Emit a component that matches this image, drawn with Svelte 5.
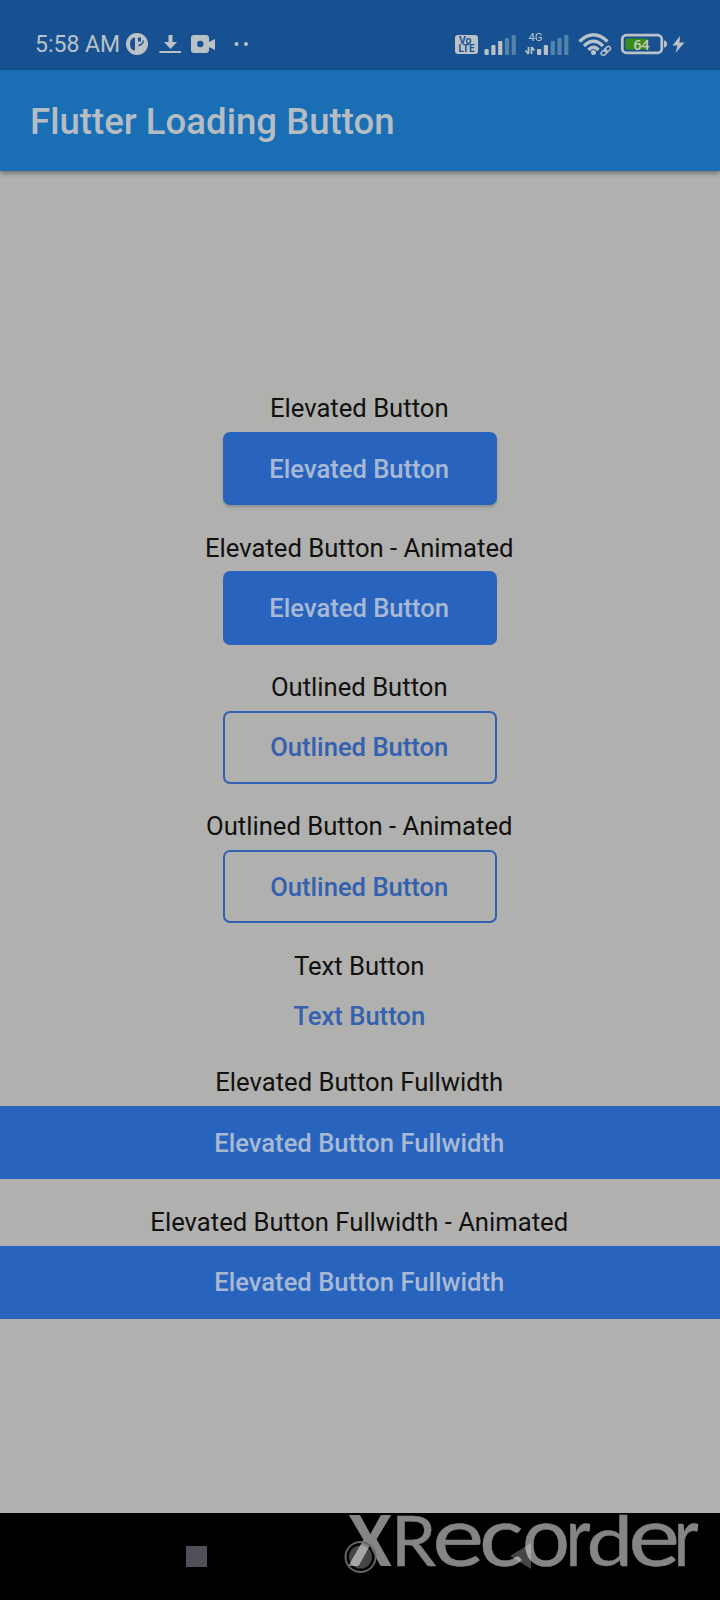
<script>
  const demos = [
    { label: 'Elevated Button', text: 'Elevated Button', kind: 'elevated raised' },
    { label: 'Elevated Button - Animated', text: 'Elevated Button', kind: 'elevated' },
    { label: 'Outlined Button', text: 'Outlined Button', kind: 'outlined' },
    { label: 'Outlined Button - Animated', text: 'Outlined Button', kind: 'outlined' },
    { label: 'Text Button', text: 'Text Button', kind: 'flat' },
    { label: 'Elevated Button Fullwidth', text: 'Elevated Button Fullwidth', kind: 'elevated full' },
    { label: 'Elevated Button Fullwidth - Animated', text: 'Elevated Button Fullwidth', kind: 'elevated full' },
  ];
  const bars = [6, 10, 14, 17, 20];
  // letter, x, font size, horizontal stretch
  const wordmark = [
    ['R', 391, 70, 1.03],
    ['e', 432.2, 83, 1.18],
    ['c', 479, 83, 1.13],
    ['o', 522, 83, 1.02],
    ['r', 565.5, 83, 0.83],
    ['d', 586.5, 69, 1.2],
    ['e', 628.2, 83, 1.18],
    ['r', 673.5, 83, 0.83],
  ];
</script>

<div class="screen">
  <div class="status">
    <span class="time">5:58 AM</span>
    <svg class="left" width="136" height="30" viewBox="120 29 136 30">
      <circle cx="137" cy="44" r="11" fill="#bac2c8" />
      <path d="M135 37.500q-5 .5-5 6.500t5 6.500zM138 37.500h3v4h-3z" fill="#185294" />
      <path d="M138.500 45.500q4-.5 5-5" stroke="#185294" stroke-width="1.300" fill="none" />
      <path d="M168.500 35h4v7h4.500l-6.500 7-6.500-7h4.500zM159.500 51h21.500v2h-21.500z" fill="#bac2c8" />
      <path d="M194 35h12q3 0 3 3v4l6-3v11l-6-3v3q0 3-3 3h-12q-3 0-3-3v-12q0-3 3-3z" fill="#bac2c8" />
      <circle cx="200.300" cy="44" r="3.200" fill="#185294" />
      <circle cx="236.500" cy="44" r="2" fill="#bac2c8" /><circle cx="246" cy="44" r="2" fill="#bac2c8" />
    </svg>
    <svg class="right" width="235" height="32" viewBox="453 27 235 32">
      <rect x="455" y="35" width="23" height="19" rx="3" fill="#bac2c8" />
      <g fill="#185294" font-family="Roboto" font-weight="700">
        <text x="459" y="43.800" font-size="10" textLength="12.500" lengthAdjust="spacingAndGlyphs">Vo</text>
        <text x="458.500" y="52" font-size="10" textLength="16" lengthAdjust="spacingAndGlyphs">LTE</text>
      </g>
      {#each bars as h, i}
        <rect x={484.5 + i * 6.8} y={55 - h} width="4.200" height={h} rx="1" fill={i < 3 ? '#bac2c8' : '#5583aa'} />
        <rect x={537 + i * 6.8} y={55 - h} width="4.200" height={h} rx="1" fill={i < 2 ? '#bac2c8' : '#5583aa'} />
      {/each}
      <text x="528.500" y="41" font-family="Roboto" font-size="11" fill="#bac2c8" textLength="14" lengthAdjust="spacingAndGlyphs">4G</text>
      <path d="M528.500 47v7M525.500 50.500l3 3.500M531.500 54v-7M534.500 50.500l-3-3.500" stroke="#bac2c8" stroke-width="1.700" fill="none" />
      <g fill="none" stroke="#bac2c8" stroke-width="3.400">
        <path d="M579.500 41.500Q593.500 28 607.500 41.500M584 46Q593.500 36.500 603 46M588.500 50Q593.500 44.500 598.500 50" />
      </g>
      <circle cx="593.500" cy="52.500" r="2.500" fill="#bac2c8" />
      <rect x="600" y="50" width="8" height="5" rx="2.500" transform="rotate(-40 604 52)" fill="none" stroke="#185294" stroke-width="4.500" />
      <g fill="none" stroke="#bac2c8" stroke-width="1.500">
        <rect x="600.500" y="50.500" width="6.500" height="4" rx="2" transform="rotate(-40 604 52)" />
        <rect x="604" y="47.500" width="6.500" height="4" rx="2" transform="rotate(-40 607 49)" />
      </g>
      <rect x="622.300" y="35.200" width="39.500" height="17.600" rx="4" fill="none" stroke="#bac2c8" stroke-width="2.800" />
      <rect x="625.500" y="38.500" width="22" height="11" rx="1" fill="#3c8c18" />
      <text x="633.500" y="49.800" font-family="Open Sans" font-size="14" font-weight="600" fill="#c8cec0" textLength="16">64</text>
      <path d="M664 40.500q3 0 3 3.500t-3 3.500z" fill="#bac2c8" />
      <path d="M680 36l-7.500 9.500h5l-2 7.500 9-10.500h-5z" fill="#bac2c8" />
    </svg>
  </div>
  <header>Flutter Loading Button</header>
  <main>
    {#each demos as d}
      <section>
        <div class="label">{d.label}</div>
        <button class={d.kind}>{d.text}</button>
      </section>
    {/each}
  </main>
  <nav>
    <svg width="720" height="87" viewBox="0 1513 720 87">
      <rect x="186" y="1546" width="21" height="21" fill="#505058" />
      <g fill="#858585" font-family="Lato">
        <text x="348.500" y="1566" font-size="70" font-weight="900" textLength="43" lengthAdjust="spacingAndGlyphs">X</text>
        {#each wordmark as [ch, x, size, stretch]}
          <text transform="translate({x} 1566) scale({stretch} 1)" font-size={size} stroke="#858585" stroke-width="0.500">{ch}</text>
        {/each}
      </g>
      <path d="M531 1543v26l-21-13z" fill="#fff" opacity=".27" />
      <circle cx="360.500" cy="1557" r="11.500" fill="#fff" opacity=".27" />
      <circle cx="360.500" cy="1557" r="15" fill="none" stroke="#65655e" stroke-width="2" />
    </svg>
  </nav>
</div>

<style>
  :global(body) { margin: 0; }
  .screen { width: 720px; height: 1600px; display: flex; flex-direction: column; background: #b0b0ae; font-family: Roboto, sans-serif; overflow: hidden; }
  .status { height: 70px; box-sizing: border-box; padding: 27px 32px 0 35px; background: #175191; display: flex; flex: none; }
  .time { font-size: 23px; line-height: 36px; color: #bac2c8; width: 85px; white-space: nowrap; }
  .left { margin-top: 2px; }
  .right { margin-left: auto; }
  header { height: 101px; flex: none; background: #1a6fb4; color: #b5bcc4; font-size: 36.600px; font-weight: 500; line-height: 103px; padding-left: 30px; box-shadow: 0 2px 5px #0006; }
  main { flex: 1; display: flex; flex-direction: column; padding-top: 223.300px; gap: 28.400px; }
  section { display: flex; flex-direction: column; align-items: center; }
  .label { font-size: 25.650px; line-height: 29px; height: 37.700px; padding-right: 1.500px; color: #111; white-space: nowrap; }
  button { font: 500 25.600px Roboto, sans-serif; height: 73.300px; width: 274px; padding: 0 1.500px 0 0; border: 0; border-radius: 7px; white-space: nowrap; }
  .elevated { background: #2864be; color: #a8b9d4; }
  .raised { box-shadow: 0 2px 3px #0003; }
  .outlined { background: none; border: 2px solid #2f62b0; color: #3360b0; }
  .flat { background: none; color: #3360b0; height: 50.600px; padding-top: 1.500px; }
  .full { width: 100%; border-radius: 0; }
  nav { height: 87px; flex: none; background: #000; }
  nav svg { display: block; overflow: visible; }
</style>
